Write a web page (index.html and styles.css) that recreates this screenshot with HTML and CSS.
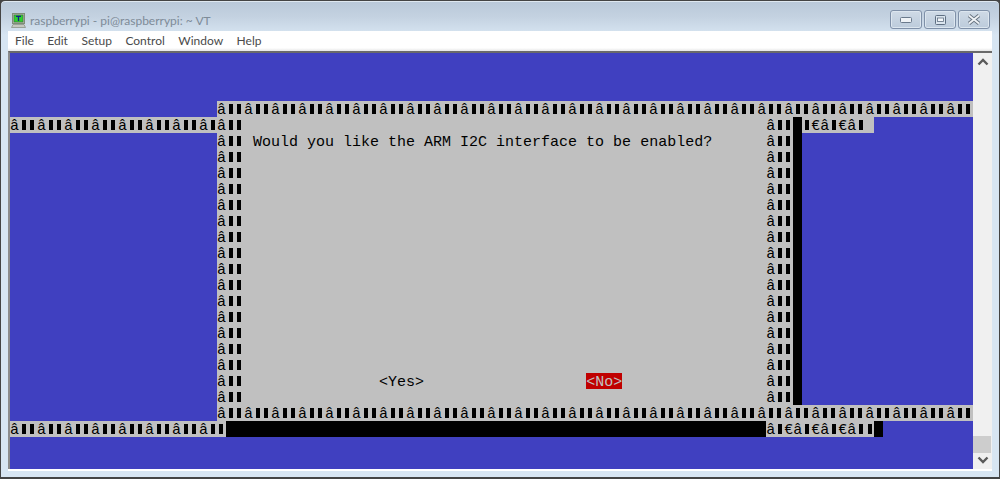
FILE: index.html
```html
<!DOCTYPE html>
<html lang="en">
<head>
<meta charset="utf-8">
<title>raspberrypi - pi@raspberrypi: ~ VT</title>
<link rel="stylesheet" href="styles.css">
</head>
<body>
<div class="window">
  <header class="titlebar">
    <svg class="appicon" width="15" height="15" viewBox="0 0 15 15">
      <rect x="1.5" y="0.5" width="12" height="10" fill="#aeb8a8" stroke="#7f8c78"/>
      <rect x="3" y="2" width="9" height="7" fill="#2fd02f" stroke="#3c6a3c" stroke-width="0.6"/>
      <path d="M5 3.4h5M7.5 3.4v4.6" stroke="#10208a" stroke-width="1.3" fill="none"/>
      <path d="M0.5 14.5l1.5-3h11l1.5 3z" fill="#c4c8c0" stroke="#8c9488" stroke-width="0.8"/>
    </svg>
    <span class="title">raspberrypi - pi@raspberrypi: ~ VT</span>
    <div class="winbtns">
      <div class="winbtn">
        <svg width="12" height="6" viewBox="0 0 12 6"><rect x="0.5" y="0.5" width="11" height="5" rx="1" fill="#eef2f6" stroke="#6a7a8c"/></svg>
      </div>
      <div class="winbtn">
        <svg width="11" height="10" viewBox="0 0 11 10"><rect x="0.5" y="0.5" width="10" height="9" rx="1" fill="#dbe5ee" stroke="#5f6f82"/><rect x="2.5" y="3" width="6" height="3.5" fill="#f4f7fa" stroke="#5f6f82" stroke-width="0.8"/></svg>
      </div>
      <div class="winbtn">
        <svg width="14" height="11" viewBox="0 0 14 11"><path d="M2 1.5l10 8M12 1.5l-10 8" stroke="#66727f" stroke-width="3.6" fill="none"/><path d="M2 1.5l10 8M12 1.5l-10 8" stroke="#f0f3f6" stroke-width="1.8" fill="none"/></svg>
      </div>
    </div>
  </header>
  <div class="client">
    <nav class="menubar">
      <span class="menu">File</span>
      <span class="menu">Edit</span>
      <span class="menu">Setup</span>
      <span class="menu">Control</span>
      <span class="menu">Window</span>
      <span class="menu">Help</span>
    </nav>
    <div class="termwrap">
      <main class="term">
<div class="row"> </div>
<div class="row"> </div>
<div class="row"> </div>
<div class="row">                       <span class="g bars">â  â  â  â  â  â  â  â  â  â  â  â  â  â  â  â  â  â  â  â  â  â  â  â  â  â  â  â  </span></div>
<div class="row"><span class="g bars">â  â  â  â  â  â  â  â </span><span class="g bars">â  </span><span class="g">                                                          </span><span class="g bars">â  </span><span class="k"> </span><span class="g"><i class="b"> </i>€â<i class="b"> </i>€â<i class="b"> </i> </span></div>
<div class="row">                       <span class="g bars">â  </span><span class="g"> Would you like the ARM I2C interface to be enabled?      </span><span class="g bars">â  </span><span class="k"> </span></div>
<div class="row">                       <span class="g bars">â  </span><span class="g">                                                          </span><span class="g bars">â  </span><span class="k"> </span></div>
<div class="row">                       <span class="g bars">â  </span><span class="g">                                                          </span><span class="g bars">â  </span><span class="k"> </span></div>
<div class="row">                       <span class="g bars">â  </span><span class="g">                                                          </span><span class="g bars">â  </span><span class="k"> </span></div>
<div class="row">                       <span class="g bars">â  </span><span class="g">                                                          </span><span class="g bars">â  </span><span class="k"> </span></div>
<div class="row">                       <span class="g bars">â  </span><span class="g">                                                          </span><span class="g bars">â  </span><span class="k"> </span></div>
<div class="row">                       <span class="g bars">â  </span><span class="g">                                                          </span><span class="g bars">â  </span><span class="k"> </span></div>
<div class="row">                       <span class="g bars">â  </span><span class="g">                                                          </span><span class="g bars">â  </span><span class="k"> </span></div>
<div class="row">                       <span class="g bars">â  </span><span class="g">                                                          </span><span class="g bars">â  </span><span class="k"> </span></div>
<div class="row">                       <span class="g bars">â  </span><span class="g">                                                          </span><span class="g bars">â  </span><span class="k"> </span></div>
<div class="row">                       <span class="g bars">â  </span><span class="g">                                                          </span><span class="g bars">â  </span><span class="k"> </span></div>
<div class="row">                       <span class="g bars">â  </span><span class="g">                                                          </span><span class="g bars">â  </span><span class="k"> </span></div>
<div class="row">                       <span class="g bars">â  </span><span class="g">                                                          </span><span class="g bars">â  </span><span class="k"> </span></div>
<div class="row">                       <span class="g bars">â  </span><span class="g">                                                          </span><span class="g bars">â  </span><span class="k"> </span></div>
<div class="row">                       <span class="g bars">â  </span><span class="g">                                                          </span><span class="g bars">â  </span><span class="k"> </span></div>
<div class="row">                       <span class="g bars">â  </span><span class="g">               &lt;Yes&gt;                  </span><span class="sel">&lt;No&gt;</span><span class="g">                </span><span class="g bars">â  </span><span class="k"> </span></div>
<div class="row">                       <span class="g bars">â  </span><span class="g">                                                          </span><span class="g bars">â  </span><span class="k"> </span></div>
<div class="row">                       <span class="g bars">â  â  â  â  â  â  â  â  â  â  â  â  â  â  â  â  â  â  â  â  â  â  â  â  â  â  â  â  </span></div>
<div class="row"><span class="g bars">â  â  â  â  â  â  â  â  </span><span class="k">                                                            </span><span class="g">â<i class="b"> </i>€â<i class="b"> </i>€â<i class="b"> </i>€â<i class="b"> </i><i class="b"> </i></span><span class="k"> </span></div>
<div class="row"> </div>
<div class="row"> </div>
      </main>
      <aside class="scrollbar">
        <svg class="arrow" width="12" height="8" viewBox="0 0 12 8"><path d="M1.5 6.5L6 2l4.5 4.5" stroke="#5a5a5a" stroke-width="2.4" fill="none"/></svg>
        <div class="track"><div class="thumb"></div></div>
        <svg class="arrow" width="12" height="8" viewBox="0 0 12 8"><path d="M1.5 1.5L6 6l4.5-4.5" stroke="#5a5a5a" stroke-width="2.4" fill="none"/></svg>
      </aside>
    </div>
  </div>
</div>
</body>
</html>
```
FILE: styles.css
```css
* { box-sizing: border-box; }
html, body { margin: 0; padding: 0; background: #444; }
.window {
  width: 1000px;
  height: 479px;
  display: flex;
  flex-direction: column;
  border: 1px solid #444;
  border-bottom-width: 2px;
  border-radius: 5px 5px 0 0;
  background: linear-gradient(180deg, #b9c8d9 0, #c4d2e1 16px, #d7e5f2 34px);
  box-shadow: inset 0 1px 0 #dfe8f0;
}
.titlebar {
  height: 30px;
  display: flex;
  align-items: flex-start;
  padding: 0 9px 0 10px;
  font-family: Lato, "Noto Sans", sans-serif;
}
.appicon { margin-top: 12px; flex: none; }
.title { margin: 10px 0 0 4px; color: #7e8b98; font-size: 12px; line-height: 20px; }
.winbtns { margin-left: auto; margin-top: 9px; display: flex; gap: 2px; }
.winbtn {
  width: 32px;
  height: 19px;
  display: flex;
  align-items: center;
  justify-content: center;
  border: 1px solid #7f90a8;
  border-radius: 3px;
  background: linear-gradient(180deg, #cfdae6, #bccbdb);
  box-shadow: inset 0 0 0 1px #dce6ef;
}
.client {
  flex: 1;
  margin: 0 7px 6px;
  display: flex;
  flex-direction: column;
  background: #fff;
  padding-bottom: 2px;
}
.menubar {
  height: 20px;
  display: flex;
  gap: 13.5px;
  align-items: center;
  padding: 0 0 1px 7px;
  font: 12px Lato, "Noto Sans", sans-serif;
  color: #4a4a4a;
  background: linear-gradient(180deg, #fff 17px, #e6e6e6 20px);
  flex: none;
}
.termwrap {
  flex: 1;
  display: flex;
  border-top: 2px solid #6a6a6a;
  border-left: 2px solid #8c8c8c;
  margin-left: 0;
  min-height: 0;
}
.term {
  width: 963px;
  background: #4040c0;
  font: 15px/20px "Liberation Mono", monospace;
  color: #000;
  flex: none;
}
.row { height: 16px; display: block; white-space: pre; }
.g { background-color: #c0c0c0; }
.k { background-color: #000; }
.sel { background-color: #c00000; color: #c0c0c0; }
.g, .k, .sel { display: inline-block; height: 16px; vertical-align: top; }
.bars {
  background-image: linear-gradient(90deg, transparent 12px, #000 12px, #000 16px, transparent 16px, transparent 20px, #000 20px, #000 24px, transparent 24px);
  background-size: 27px 10px;
  background-position: 0 3px;
  background-repeat: repeat-x;
}
.b {
  font-style: normal;
  display: inline-block;
  width: 9px;
  height: 16px;
  vertical-align: top;
  background: linear-gradient(#000, #000) no-repeat 3px 3px / 4px 10px;
}
.scrollbar {
  flex: 1;
  display: flex;
  flex-direction: column;
  align-items: center;
  background: #f0f0f0;
  padding: 5px 0 5px;
}
.arrow { flex: none; }
.track { flex: 1; width: 100%; display: flex; flex-direction: column; justify-content: flex-end; padding: 0 1px 3px 0; }
.thumb { height: 17px; background: #cdcdcd; }
```
